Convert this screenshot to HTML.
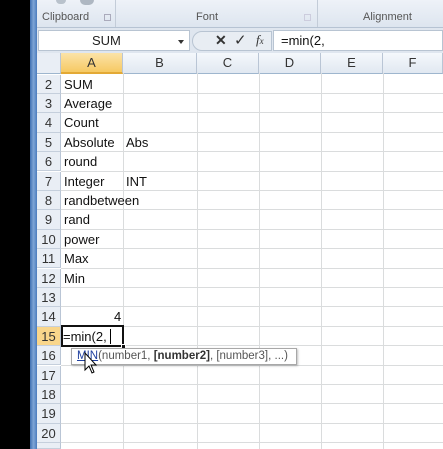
<!DOCTYPE html><html style="width:443px;height:449px;overflow:hidden"><head><style>
*{margin:0;padding:0;box-sizing:border-box}
body{width:443px;height:449px;overflow:hidden;background:#fff;font-family:"Liberation Sans",sans-serif;position:relative}
.a{position:absolute}
.rh{position:absolute;left:37px;width:24px;background:#e9eef5;border-bottom:1px solid #c5cfdc;border-right:1px solid #b9c5d5;font-size:13px;color:#333;text-align:center;line-height:19px}
.c{position:absolute;font-size:13px;color:#111;line-height:19px}
.hl{position:absolute;left:61px;right:0;height:1px;background:#dadcdd}
.vl{position:absolute;top:73px;bottom:0;width:1px;background:#dadcdd}
.ch{position:absolute;top:53px;height:21px;background:linear-gradient(#f5f8fc,#e1e8f1);border-right:1px solid #b9c5d5;border-bottom:1px solid #9eb6ce;font-size:13px;color:#333;text-align:center;line-height:20px}
</style></head><body>
<div class="a" style="left:0;top:0;width:30px;height:449px;background:#000"></div>
<div class="a" style="left:30px;top:0;width:7px;height:449px;background:linear-gradient(90deg,#3f6fb0,#7fa6d6,#4b7bbd)"></div>
<div class="a" style="left:37px;top:0;width:406px;height:28px;background:linear-gradient(#eef2f8,#dde5ef);border-bottom:1px solid #b6c3d3"></div>
<div class="a" style="left:56px;top:0;width:10px;height:4px;background:#b9c2cc;border-radius:0 0 4px 4px"></div>
<div class="a" style="left:80px;top:0;width:14px;height:5px;background:#aeb7c2;border-radius:0 0 7px 7px"></div>
<div class="a" style="left:115px;top:0;width:1px;height:27px;background:#c3ccd8"></div>
<div class="a" style="left:317px;top:0;width:1px;height:27px;background:#c3ccd8"></div>
<div class="a" style="left:42px;top:11px;font-size:11px;color:#555">Clipboard</div>
<div class="a" style="left:104px;top:14px;width:7px;height:7px;border:1px solid #aab"></div>
<div class="a" style="left:196px;top:11px;font-size:11px;color:#555">Font</div>
<div class="a" style="left:304px;top:14px;width:7px;height:7px;border:1px solid #ccd"></div>
<div class="a" style="left:363px;top:11px;font-size:11px;color:#555">Alignment</div>
<div class="a" style="left:37px;top:28px;width:406px;height:25px;background:#dfe6ef"></div>
<div class="a" style="left:38px;top:30px;width:152px;height:21px;background:#fff;border:1px solid #b8c4d2"></div>
<div class="a" style="left:92px;top:33px;font-size:13px;color:#222">SUM</div>
<div class="a" style="left:178px;top:40px;border-left:3px solid transparent;border-right:3px solid transparent;border-top:4px solid #333"></div>
<div class="a" style="left:192px;top:31px;width:80px;height:20px;background:#e8edf3;border-radius:10px 0 0 10px;border:1px solid #b8c4d2"></div>
<div class="a" style="left:215px;top:32px;font-size:14px;font-weight:bold;color:#333">✕</div>
<div class="a" style="left:234px;top:31px;font-size:15px;color:#333">✓</div>
<div class="a" style="left:256px;top:32px;font-size:13px;font-style:italic;font-family:'Liberation Serif',serif;color:#333">f<span style="font-size:9px">x</span></div>
<div class="a" style="left:273px;top:30px;width:170px;height:21px;background:#fff;border:1px solid #b8c4d2"></div>
<div class="a" style="left:281px;top:33px;font-size:13px;color:#111">=min(2,</div>
<div class="a" style="left:37px;top:53px;width:24px;height:21px;background:#e9eef5;border-right:1px solid #b9c5d5;border-bottom:1px solid #9eb6ce"></div>
<div class="ch" style="left:61px;width:62px;background:linear-gradient(#fbe3a8,#f6c963);border-bottom:2px solid #e3a935">A</div>
<div class="ch" style="left:123px;width:74px">B</div>
<div class="ch" style="left:197px;width:62px">C</div>
<div class="ch" style="left:259px;width:62px">D</div>
<div class="ch" style="left:321px;width:62px">E</div>
<div class="ch" style="left:383px;width:60px">F</div>
<div class="vl" style="left:123px"></div><div class="vl" style="left:197px"></div><div class="vl" style="left:259px"></div><div class="vl" style="left:321px"></div><div class="vl" style="left:383px"></div>
<div class="rh" style="top:74.5px;height:19.4px">2</div><div class="hl" style="top:93px"></div>
<div class="rh" style="top:93.9px;height:19.4px">3</div><div class="hl" style="top:112.4px"></div>
<div class="rh" style="top:113.3px;height:19.4px">4</div><div class="hl" style="top:131.8px"></div>
<div class="rh" style="top:132.7px;height:19.4px">5</div><div class="hl" style="top:151.2px"></div>
<div class="rh" style="top:152.1px;height:19.4px">6</div><div class="hl" style="top:170.6px"></div>
<div class="rh" style="top:171.5px;height:19.4px">7</div><div class="hl" style="top:190px"></div>
<div class="rh" style="top:190.9px;height:19.4px">8</div><div class="hl" style="top:209.4px"></div>
<div class="rh" style="top:210.3px;height:19.4px">9</div><div class="hl" style="top:228.8px"></div>
<div class="rh" style="top:229.7px;height:19.4px">10</div><div class="hl" style="top:248.2px"></div>
<div class="rh" style="top:249.1px;height:19.4px">11</div><div class="hl" style="top:267.6px"></div>
<div class="rh" style="top:268.5px;height:19.4px">12</div><div class="hl" style="top:287px"></div>
<div class="rh" style="top:287.9px;height:19.4px">13</div><div class="hl" style="top:306.4px"></div>
<div class="rh" style="top:307.3px;height:19.4px">14</div><div class="hl" style="top:325.8px"></div>
<div class="rh" style="top:326.7px;height:19.4px;background:#f9d68b">15</div><div class="hl" style="top:345.2px"></div>
<div class="rh" style="top:346.1px;height:19.4px">16</div><div class="hl" style="top:364.6px"></div>
<div class="rh" style="top:365.5px;height:19.4px">17</div><div class="hl" style="top:384px"></div>
<div class="rh" style="top:384.9px;height:19.4px">18</div><div class="hl" style="top:403.4px"></div>
<div class="rh" style="top:404.3px;height:19.4px">19</div><div class="hl" style="top:422.8px"></div>
<div class="rh" style="top:423.7px;height:19.4px">20</div><div class="hl" style="top:442.2px"></div>
<div class="rh" style="top:443.1px;height:6px;overflow:hidden"></div>
<div class="c" style="left:64px;top:75px">SUM</div>
<div class="c" style="left:64px;top:94px">Average</div>
<div class="c" style="left:64px;top:113px">Count</div>
<div class="c" style="left:64px;top:133px">Absolute</div><div class="c" style="left:126px;top:133px">Abs</div>
<div class="c" style="left:64px;top:152px">round</div>
<div class="c" style="left:64px;top:172px">Integer</div><div class="c" style="left:126px;top:172px">INT</div>
<div class="c" style="left:64px;top:191px">randbetween</div>
<div class="c" style="left:64px;top:210px">rand</div>
<div class="c" style="left:64px;top:230px">power</div>
<div class="c" style="left:64px;top:249px">Max</div>
<div class="c" style="left:64px;top:269px">Min</div>
<div class="c" style="left:114px;top:307px">4</div>
<div class="a" style="left:61px;top:325px;width:63px;height:22px;border:2px solid #111;background:#fff"></div>
<div class="a" style="left:121px;top:344px;width:5px;height:5px;background:#111;border:1px solid #fff"></div>
<div class="c" style="left:63px;top:327px">=min(2,</div>
<div class="a" style="left:110px;top:329px;width:1px;height:15px;background:#000"></div>
<div class="a" style="left:71px;top:348px;width:226px;height:17px;background:#fff;border:1px solid #a8a8a8;box-shadow:1px 1px 2px rgba(0,0,0,.25);font-size:11.5px;color:#555;line-height:15px;padding-left:5px;white-space:nowrap"><span style="color:#1f3f9f;text-decoration:underline">MIN</span>(number1, <b style="color:#333">[number2]</b>, [number3], ...)</div>
<svg class="a" style="left:84px;top:352px" width="14" height="24" viewBox="0 0 14 24"><path d="M1 1 L1 18 L5 14 L8 21 L10 20 L7 13 L12 13 Z" fill="#fff" stroke="#000" stroke-width="1"/></svg>
</body></html>
